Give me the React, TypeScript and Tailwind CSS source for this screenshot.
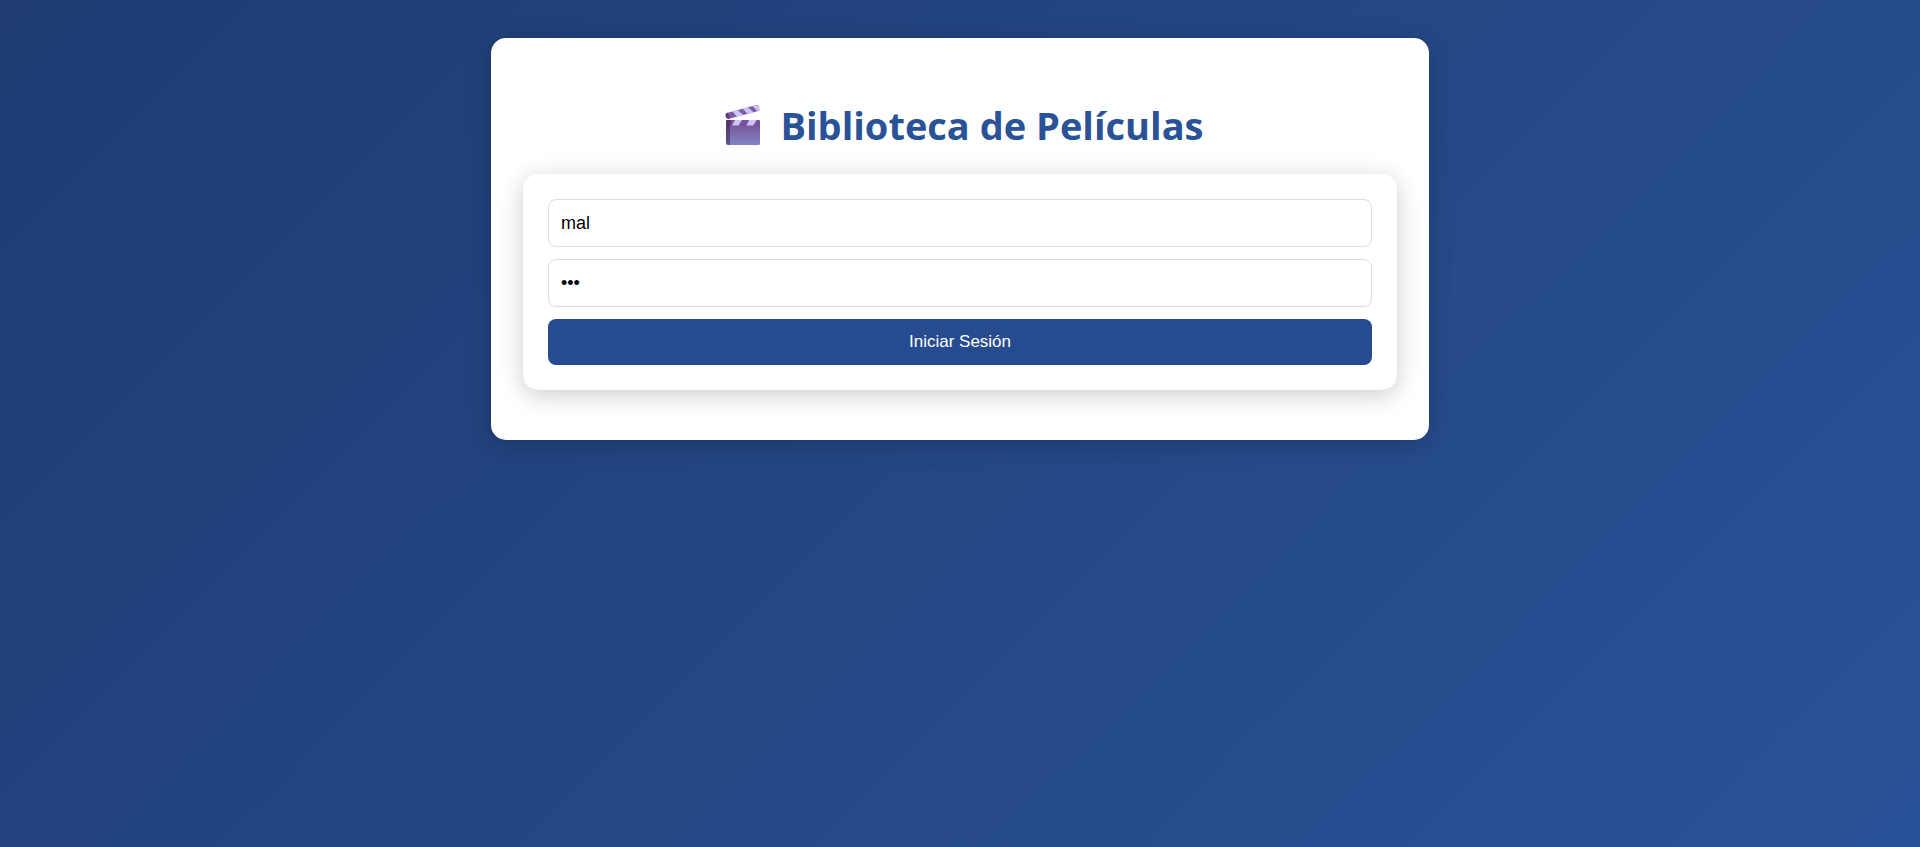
import { useState } from "react";

function ClapperIcon() {
  return (
    <svg
      width="54"
      height="44"
      viewBox="0 0 54 44"
      className="shrink-0"
      aria-hidden="true"
    >
      <defs>
        <linearGradient id="board" x1="0" y1="0" x2="0" y2="1">
          <stop offset="0" stopColor="#76589b" />
          <stop offset="1" stopColor="#8184c6" />
        </linearGradient>
        <linearGradient id="spine" x1="0" y1="0" x2="0" y2="1">
          <stop offset="0" stopColor="#4b3360" />
          <stop offset="1" stopColor="#5d548a" />
        </linearGradient>
        <clipPath id="arm">
          <path d="M10.8 10 L40.5 2.1 Q42 1.8 42.4 3 L43.4 6.2 Q43.6 7.6 42.4 8 L13 15.7 Q10.6 16 9.8 13.4 Q9.2 10.8 10.8 10Z" />
        </clipPath>
        <clipPath id="strip">
          <path d="M12 17 H43 Q44 17 44 18 V23 H12Z" />
        </clipPath>
      </defs>
      <g clipPath="url(#arm)">
        <rect x="8" y="1" width="37" height="16" fill="#7d5ba6" />
        <path d="M8 9 H11.5 L14 16 H8Z" fill="#553a73" />
        <path d="M16.2 8 L21.2 6.6 L27.6 12.6 L21.4 14.4Z" fill="#cdc5f8" />
        <path d="M26.6 5.4 L31.8 4 L38 9.8 L32.2 11.4Z" fill="#cdc5f8" />
        <path d="M36.2 2.8 L40.4 1.6 L45 6 L41.6 8.6Z" fill="#cdc5f8" />
      </g>
      <path d="M10.5 17 H14.5 V42 H12 Q10 42 10 39.5 V17.5Z" fill="url(#spine)" />
      <path d="M14 22 H44 V40.5 Q44 42 42.5 42 H14Z" fill="url(#board)" />
      <g clipPath="url(#strip)">
        <rect x="12" y="17" width="32" height="6" fill="#7a51a1" />
        <path d="M12 17 H15 L14 23 H12Z" fill="#4f3666" />
        <path d="M19 17 H26 L22.5 22.6 H16Z" fill="#cdc5f8" />
        <path d="M33.2 17 H40.6 L37.2 22.6 H30.4Z" fill="#cdc5f8" />
      </g>
    </svg>
  );
}

const fieldClass =
  "h-12 w-full rounded-lg border border-[#dddddd] bg-white px-3 font-['Liberation_Sans',Arial,sans-serif] text-[18px] text-black outline-none focus:border-[#2a5298]";

export default function App() {
  const [user, setUser] = useState("mal");
  const [password, setPassword] = useState("mal");

  return (
    <div className="min-h-screen bg-linear-135 from-[#1e3c72] to-[#2a5298] px-4 py-[38px]">
      <main className="mx-auto max-w-[938px] rounded-[15px] bg-white px-8 pt-[62px] pb-[50px] shadow-[0_5px_25px_rgba(0,0,0,0.2)]">
        <h1 className="mb-6 flex h-[50px] items-center justify-center gap-2.5 font-['Open_Sans','Noto_Sans',sans-serif] text-[38px] leading-[48px] font-bold text-[#2a5298]">
          <ClapperIcon />
          Biblioteca de Películas
        </h1>
        <form
          className="flex flex-col gap-3 rounded-[15px] bg-white p-[25px] shadow-[0_5px_25px_rgba(0,0,0,0.2)]"
          onSubmit={(event) => event.preventDefault()}
        >
          <input
            type="text"
            aria-label="Usuario"
            autoComplete="username"
            className={fieldClass}
            value={user}
            onChange={(event) => setUser(event.target.value)}
          />
          <input
            type="password"
            aria-label="Contraseña"
            autoComplete="current-password"
            className={fieldClass}
            value={password}
            onChange={(event) => setPassword(event.target.value)}
          />
          <button
            type="submit"
            className="h-[46px] w-full cursor-pointer rounded-lg bg-[#264b8f] font-['Liberation_Sans',Arial,sans-serif] text-[17px] text-white"
          >
            Iniciar Sesión
          </button>
        </form>
      </main>
    </div>
  );
}
